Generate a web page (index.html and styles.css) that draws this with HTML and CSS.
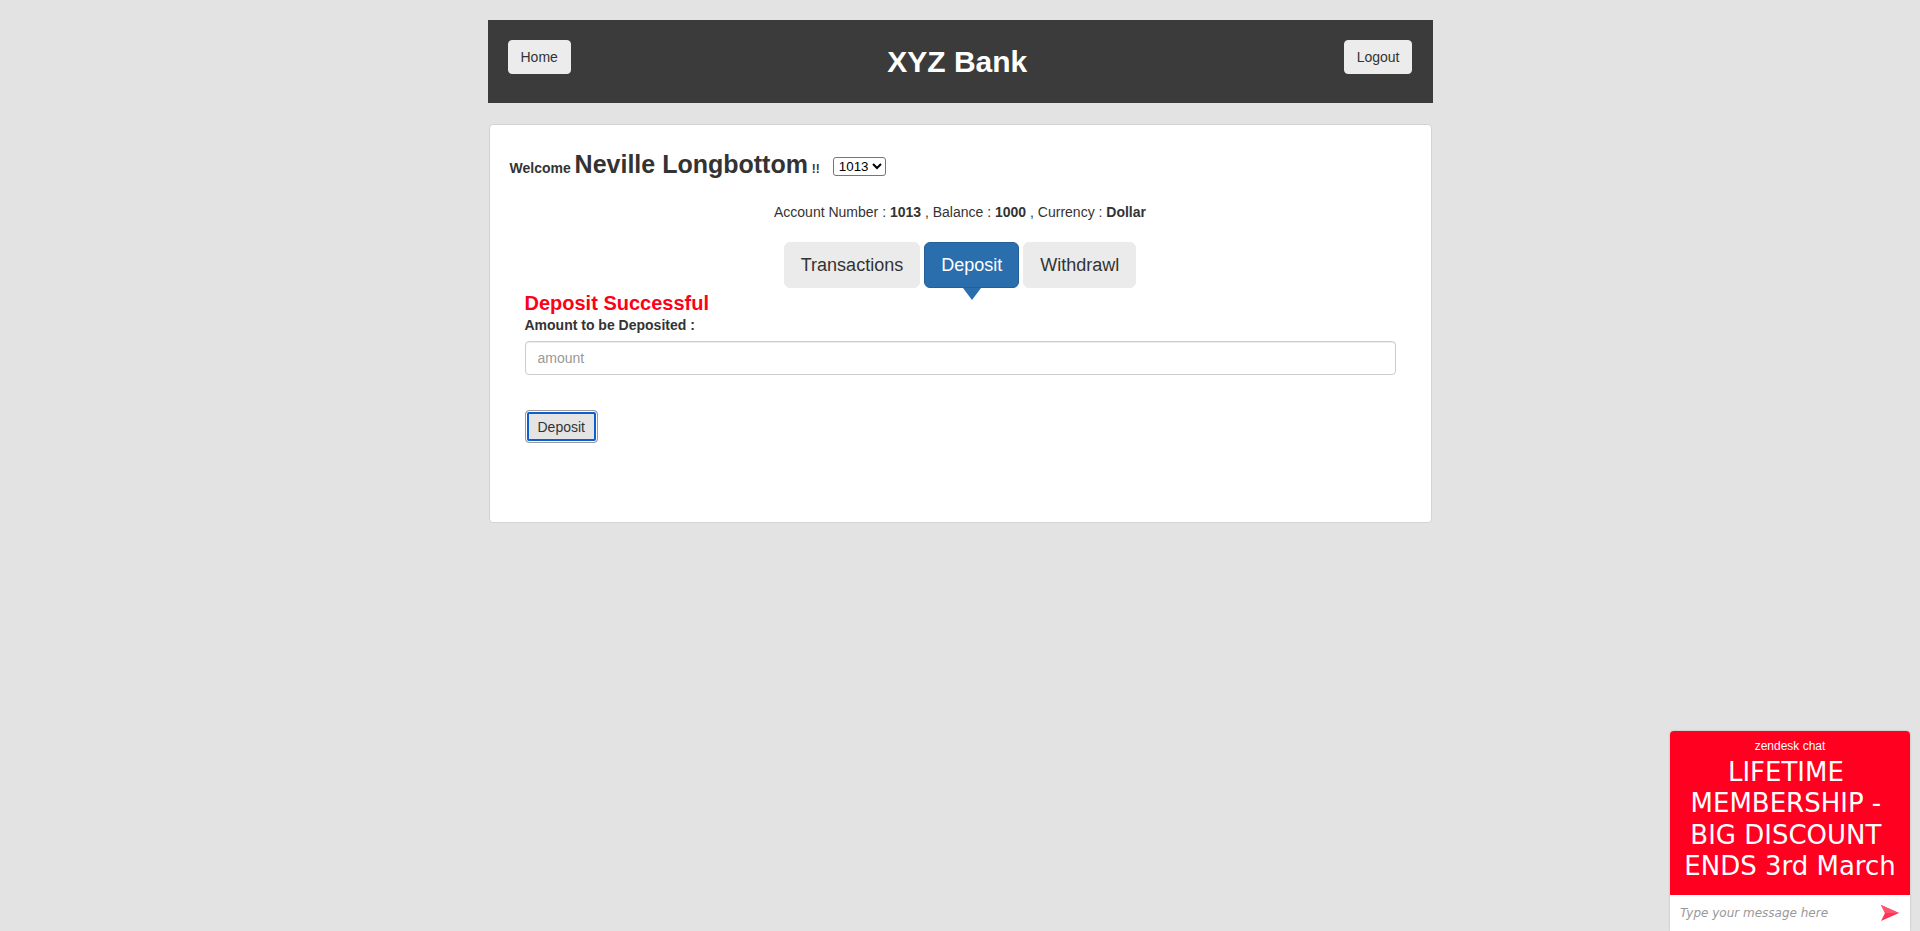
FILE: index.html
```html
<!DOCTYPE html>
<html lang="en">
<head>
<meta charset="utf-8">
<title>XYZ Bank</title>
<link rel="stylesheet" href="styles.css">
</head>
<body>
<div class="main">
  <div class="header">
    <button class="hbtn">Home</button>
    <strong class="brand">XYZ Bank</strong>
    <button class="hbtn">Logout</button>
  </div>
  <div class="card">
    <div class="welcome">
      <strong class="wel">Welcome <span class="name">Neville Longbottom</span> <span class="bang">!!</span></strong><select class="acct"><option>1013</option></select>
    </div>
    <div class="info">Account Number : <strong>1013</strong> , Balance : <strong>1000</strong> , Currency : <strong>Dollar</strong></div>
    <div class="tabs">
      <button class="tab">Transactions</button>
      <button class="tab active">Deposit</button>
      <button class="tab">Withdrawl</button>
    </div>
    <div class="form">
      <div class="msg">Deposit Successful</div>
      <label class="lbl">Amount to be Deposited :</label>
      <input class="amount" type="number" placeholder="amount">
      <button class="submit">Deposit</button>
    </div>
  </div>
</div>
<div class="chat">
  <div class="chat-top">
    <div class="brandline">zendesk chat</div>
    <div class="promo">LIFETIME&nbsp;<br>MEMBERSHIP -&nbsp;<br>BIG DISCOUNT&nbsp;<br>ENDS 3rd March</div>
  </div>
  <div class="chat-input">
    <span class="ph">Type your message here</span>
    <svg class="send" width="18" height="16" viewBox="0 0 18 16"><path d="M0 0 L18 8 L0 16 L4 8 Z" fill="#ff3352"/><path d="M0 0 L18 8 L4 8 Z" fill="#ff5470"/></svg>
  </div>
</div>
</body>
</html>
```
FILE: styles.css
```css
body {
  margin: 0;
  background: #e3e3e3;
  font-family: "Liberation Sans", Arial, Helvetica, sans-serif;
  font-size: 14px;
  color: #333;
}
.main {
  width: 945px;
  margin: 20px auto 0;
}
.header {
  background: #3b3b3b;
  height: 83px;
  box-sizing: border-box;
  padding: 20px 20px 0;
  display: flex;
  justify-content: space-between;
  align-items: flex-start;
}
.hbtn {
  font-family: inherit;
  font-size: 14px;
  line-height: 20px;
  color: #333;
  background: #ececec;
  border: 1px solid #ececec;
  border-radius: 4px;
  padding: 6px 12px;
}
.brand {
  color: #fff;
  font-size: 30px;
  line-height: 43px;
  font-weight: bold;
}
.card {
  margin: 21px 1px 0;
  background: #fff;
  border: 1px solid #d3d3d3;
  border-radius: 4px;
  padding: 20px 20px 0;
}
.welcome {
  margin-top: 5px;
  line-height: 28px;
  display: flex;
  align-items: baseline;
}
.wel {
  font-size: 14px;
}
.name {
  font-size: 25px;
}
.bang {
  font-size: 12px;
}
.acct {
  margin-left: 13px;
  font-family: Arial, "Liberation Sans", sans-serif;
  font-size: 13.33px;
  height: 19px;
  width: 53px;
  padding: 0 1px;
  border: 1px solid #767676;
  border-radius: 3px;
  background: #fff;
  color: #000;
  align-self: center;
}
.info {
  margin-top: 19px;
  line-height: 20px;
  text-align: center;
}
.tabs {
  margin-top: 20px;
  display: flex;
  justify-content: center;
  gap: 4px;
}
.tab {
  position: relative;
  font-family: inherit;
  font-size: 18px;
  line-height: 24px;
  padding: 10px 16px;
  border: 1px solid #ebebeb;
  border-radius: 6px;
  background: #ebebeb;
  color: #333;
}
.tab.active {
  background: #2a6ead;
  border-color: #245f97;
  color: #fff;
}
.tab.active::after {
  content: "";
  position: absolute;
  left: 50%;
  bottom: -13px;
  margin-left: -9px;
  border-top: 12px solid #2a6ead;
  border-left: 9px solid transparent;
  border-right: 9px solid transparent;
}
.form {
  margin: 4px 15px 0;
  padding-bottom: 79px;
}
.msg {
  color: #ff0019;
  font-size: 20px;
  font-weight: bold;
  line-height: 23px;
}
.lbl {
  display: block;
  font-weight: bold;
  line-height: 20px;
  margin-bottom: 6px;
}
.amount {
  display: block;
  box-sizing: border-box;
  width: 100%;
  height: 34px;
  padding: 6px 12px;
  font-family: inherit;
  font-size: 14px;
  color: #555;
  border: 1px solid #ccc;
  border-radius: 4px;
  box-shadow: inset 0 1px 1px rgba(0,0,0,0.075);
  margin: 0;
}
.amount::placeholder {
  color: #999;
}
.submit {
  display: block;
  margin-top: 35px;
  height: 33px;
  padding: 0 12px;
  font-family: inherit;
  font-size: 14px;
  color: #333;
  background: #e4e4e4;
  border: 1px solid #9a9a9a;
  border-radius: 4px;
  box-shadow: inset 0 0 0 1px #fff, inset 0 0 0 3px #0d5fcf;
}
.chat {
  position: fixed;
  right: 10px;
  bottom: 0;
  width: 240px;
  box-shadow: 0 0 2px rgba(0,0,0,0.25);
  border-radius: 4px 4px 0 0;
  overflow: hidden;
}
.chat-top {
  background: #ff0021;
  color: #fff;
  text-align: center;
  padding: 7px 0 13px;
}
.brandline {
  font-size: 12px;
  line-height: 16px;
}
.promo {
  margin-top: 3px;
  font-family: "DejaVu Sans", Verdana, sans-serif;
  font-size: 26px;
  line-height: 31.2px;
}
.chat-input {
  background: #fff;
  height: 36px;
  display: flex;
  align-items: center;
  justify-content: space-between;
  padding: 0 11px 0 10px;
}
.ph {
  font-family: "DejaVu Sans", Verdana, sans-serif;
  font-style: italic;
  font-size: 12px;
  color: #999;
}
.send {
  display: block;
}
```
